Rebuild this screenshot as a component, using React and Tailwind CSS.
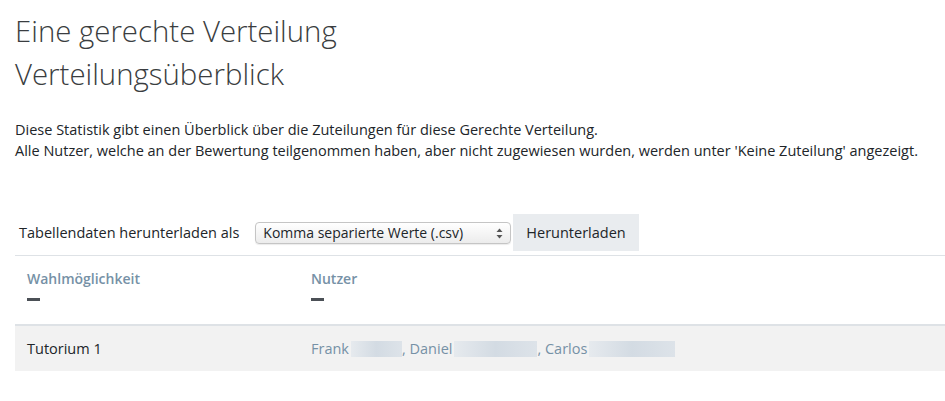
import React from 'react';

const Blur = ({ w }) => (
  <span
    className="inline-block h-[16px] ml-[2px] align-[-3px] bg-gradient-to-r from-[#e6eaee] via-[#d3dbe3] to-[#dde3e9]"
    style={{ width: w }}
  />
);

export default function App() {
  return (
    <div className="bg-white min-h-[401px] w-[945px] pl-[15px] text-[#212529] font-['Open_Sans',sans-serif]">
      {/* Titles */}
      <div className="pt-[10px] text-[#3a3d40] font-light text-[29.4px] leading-[43px]">
        <h2>Eine gerechte Verteilung</h2>
        <h2>Verteilungsüberblick</h2>
      </div>

      {/* Description */}
      <div className="mt-[23px] text-[14.5px] leading-[21px]">
        <p>Diese Statistik gibt einen Überblick über die Zuteilungen für diese Gerechte Verteilung.</p>
        <p>Alle Nutzer, welche an der Bewertung teilgenommen haben, aber nicht zugewiesen wurden, werden unter 'Keine Zuteilung' angezeigt.</p>
      </div>

      {/* Download */}
      <div className="mt-[53px] flex items-center text-[14.5px]">
        <span className="ml-[4px] mr-[16px]">Tabellendaten herunterladen als</span>
        <div className="relative w-[256px] h-[22px] rounded-[4px] border border-[#c5c5c5] bg-gradient-to-b from-white to-[#ececec] flex items-center pl-[7px] text-[14px] shadow-[0_1px_1px_rgba(0,0,0,0.08)]">
          <span>Komma separierte Werte (.csv)</span>
          <svg className="absolute right-[7px] top-[5px]" width="7" height="11" viewBox="0 0 7 11">
            <path d="M3.5 0.5 L6.5 4 H0.5 Z" fill="#555" />
            <path d="M3.5 10.5 L6.5 7 H0.5 Z" fill="#555" />
          </svg>
        </div>
        <button className="ml-[2px] h-[37px] px-[13px] bg-[#e9ecef] text-[14.5px] text-[#212529]">Herunterladen</button>
      </div>

      <div className="mt-[4px] border-t border-[#dee2e6]" />

      {/* Table */}
      <div className="grid grid-cols-[284px_1fr] border-b-2 border-[#dee2e6]">
        <div className="pl-[12px] pt-[13px] h-[68px]">
          <div className="text-[14px] font-semibold text-[#7691a6] leading-[20px]">Wahlmöglichkeit</div>
          <div className="mt-[9px] w-[13px] h-[3px] bg-[#4b5056]" />
        </div>
        <div className="pl-[12px] pt-[13px]">
          <div className="text-[14px] font-semibold text-[#7691a6] leading-[20px]">Nutzer</div>
          <div className="mt-[9px] w-[13px] h-[3px] bg-[#4b5056]" />
        </div>
      </div>
      <div className="grid grid-cols-[284px_1fr] h-[45px] bg-[#f2f2f2] items-center text-[14.5px]">
        <div className="pl-[12px]">Tutorium 1</div>
        <div className="pl-[12px] text-[#7691a6]">
          Frank<Blur w="51px" />, Daniel<Blur w="83px" />, Carlos<Blur w="86px" />
        </div>
      </div>
    </div>
  );
}
